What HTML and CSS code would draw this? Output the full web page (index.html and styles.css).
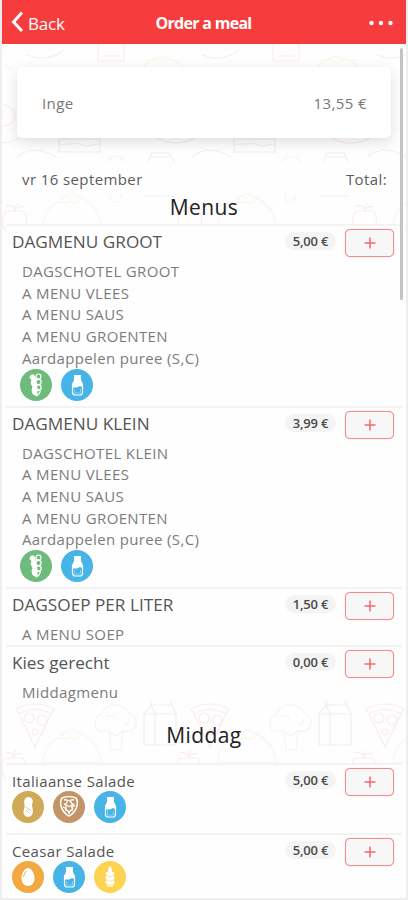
FILE: index.html
```html
<!DOCTYPE html>
<html lang="nl">
<head>
    <meta charset="utf-8">
    <title>Order a meal</title>
    <link rel="stylesheet" href="styles.css">
</head>
<body>
    <svg class="defs" width="0" height="0">
        <symbol id="milk" viewBox="0 0 32 32">
            <path d="M11.500 15v8.500a2.500 2.500 0 0 0 2.500 2.500h5a2.500 2.500 0 0 0 2.500-2.500V15" fill="none" stroke="#fff" stroke-width="1.200"/>
            <path d="M13 6h7v5l2 4v3.500l-3-1.500-3 1.500h-5V15l2-4z" fill="#fff"/>
            <path d="M13.500 20v4h6v-4" fill="none" stroke="#fff" stroke-width=".6" opacity=".6"/>
        </symbol>
        <symbol id="celery" viewBox="0 0 32 32">
            <path d="M10 8c1-3 4-3 5 0l1 6 1 5v8l-4-2-1-4 1-3-2-4 1-3-2-2z" fill="#fff" stroke="#fff"/>
            <g fill="none" stroke="#fff" stroke-width="1.200">
                <circle cx="18.500" cy="7.500" r="2.500"/>
                <circle cx="18.500" cy="13" r="2.700"/>
                <circle cx="18.500" cy="18.500" r="2.700"/>
                <path d="M16 22q5-2 4 1t-4 4"/>
            </g>
        </symbol>
        <symbol id="peanut" viewBox="0 0 32 32">
            <path d="M16.500 6c3 0 5 3 4 6-.7 2-.5 3 0 5 1.500 5-1 9-4.500 9s-5.500-4-4-8c.8-2 .8-3 .3-5-.8-4 1.200-7 4.200-7z" fill="#fff"/>
            <path d="M14 16l5 4M14 19l3 3" stroke="#d0aa58" stroke-width=".7"/>
        </symbol>
        <symbol id="walnut" viewBox="0 0 32 32">
            <path d="M9 7q7-3 14 0 2 3 1 8-2 7-8 10-6-3-8-10-1-5 1-8z" fill="none" stroke="#fff" stroke-width="1.500"/>
            <path d="M11 9q4-1 3 2t-3 2q4 1 1 5M21 9q-4-1-3 2t3 2q-4 1-1 5M14 14q2 3 4 0M12 19q4 0 4 4 0-4 4-4M15 9l3 2M10 16l4 2M18 17l4-3" fill="none" stroke="#fff" stroke-width="1.300"/>
        </symbol>
        <symbol id="egg" viewBox="0 0 32 32">
            <path d="M16 7c3 0 6.500 5 6.500 10s-3 8-6.500 8-6.500-3-6.500-8S13 7 16 7z" fill="#fff"/>
            <path d="M11.500 16q.5-4 3-6" fill="none" stroke="#f3a942" stroke-width="1"/>
        </symbol>
        <symbol id="wheat" viewBox="0 0 32 32">
            <path d="M16 5q3 3 1.500 6 3-.5 3 1.500l-1 2.500q1.500 0 1 2.500l-1 2q1.500 0 1 2.500l-1.500 3q-3 1.500-6 0L11.500 22q-.5-2.500 1-2.500l-1-2q-.5-2.500 1-2.500l-1-2.500q0-2 3-1.500Q13 8 16 5z" fill="#fff"/>
            <path d="M12 14l4 2 4-2M12 18.500l4 2 4-2M12 22.500l4 2 4-2" fill="none" stroke="#fdd352" stroke-width=".6"/>
        </symbol>
        <symbol id="plus" viewBox="0 0 12 12">
            <path d="M6 .5v11M.5 6h11" fill="none" stroke="#f4696b" stroke-width="1.500"/>
        </symbol>
    </svg>

    <header class="navbar">
        <a class="back">
            <svg width="14" height="22" viewBox="0 0 14 22"><path d="M12 1.500L3.500 11l8.500 9" fill="none" stroke="#fff" stroke-width="3"/></svg>
            <span>Back</span>
        </a>
        <h1>Order a meal</h1>
        <svg class="more" width="24" height="6" viewBox="0 0 24 6" fill="#fff">
            <circle cx="2.500" cy="3" r="2.200"/><circle cx="12" cy="3" r="2.200"/><circle cx="21.500" cy="3" r="2.200"/>
        </svg>
    </header>

    <main class="page">
        <svg class="food" width="404" height="856" fill="none" stroke-width="1.200">
            <defs>
                <g id="pizza" stroke="#fbe9ea">
                    <path d="M0 4Q19 -6 38 4l-3 5Q19 0 3 9zM3 9l16 33L35 9"/>
                    <circle cx="13" cy="13" r="5"/><circle cx="26" cy="15" r="5"/><circle cx="19" cy="27" r="3"/>
                </g>
                <g id="broccoli" stroke="#f0f3f1">
                    <path d="M12 27q-12 3-12-8 0-7 6-8Q11 0 21 1q9 0 13 8 9 3 7 12-3 8-13 6M14 27l2 19h10l2-19-7 5zM11 13q6-4 9 2M28 20q5 1 6-5"/>
                </g>
                <g id="carton" stroke="#e9ecf1">
                    <path d="M0 14L7 5h21l4 9v31H0zM7 0h20v5H7zM0 14h11v31M11 14L7 5M11 14h21"/>
                </g>
                <g id="taco" stroke="#f9f6e4">
                    <path d="M0 34Q2 14 18 9q3-6 7-5 5-5 9 0 20 7 25 30zM18 9q5 4 9 0 5 5 10-1"/>
                </g>
                <g id="tomato" stroke="#fbe9ea">
                    <path d="M3 11q10-3 20 0 4 12-2 19H4Q-2 22 3 11zM13 11q-1-5 2-9M13 8Q8 3 4 5M13 8q5-4 9-2"/>
                </g>
                <g id="tile">
                    <path stroke="#fbe9ea" d="M96 0v17h26V0M100 12h18M15 113q17-14 39 0M25 11q20 8 37-5"/>
                    <path stroke="#f9f6e4" d="M139 26q17-26 46 0M-36 26q17-26 46 0M144 16h36"/>
                    <path stroke="#fbe9ea" d="M155 94q18 10 38 0M-20 94q18 10 38 0M0 60q13 3 13 12T0 82"/>
                    <path stroke="#e9ecf1" d="M57 95h41v13H57zM57 101l20-2 6 3 15-2M146 118l4-9h17l5 9M149 113h20M142 152h30"/>
                    <path stroke="#f2f4f2" d="M108 150q0 9 5 8 6 0 6-8M104 118q10-12 20 0"/>
                    <use href="#taco" x="41" y="148"/>
                    <use href="#tomato" x="0" y="157"/>
                </g>
                <g id="tile-low">
                    <use href="#pizza" x="14" y="661"/>
                    <use href="#broccoli" x="93" y="660"/>
                    <use href="#carton" x="142" y="656"/>
                    <use href="#taco" x="41" y="684"/>
                    <use href="#tomato" x="-1" y="704"/>
                </g>
            </defs>
            <use href="#tile"/><use href="#tile" x="175"/><use href="#tile" x="350"/>
            <use href="#tile-low"/><use href="#tile-low" x="175"/><use href="#tile-low" x="350"/>
        </svg>

        <section class="balance">
            <span>Inge</span>
            <span>13,55 €</span>
        </section>

        <div class="day">
            <span>vr 16 september</span>
            <span>Total:</span>
        </div>

        <h2 class="menus">Menus</h2>
        <ul class="items">
            <li>
                <div class="row">
                    <h3>DAGMENU GROOT</h3>
                    <span class="price">5,00 €</span>
                    <button class="add"><svg><use href="#plus"/></svg></button>
                </div>
                <div class="parts">
                    <p>DAGSCHOTEL GROOT</p>
                    <p>A MENU VLEES</p>
                    <p>A MENU SAUS</p>
                    <p>A MENU GROENTEN</p>
                    <p>Aardappelen puree (S,C)</p>
                </div>
                <div class="allergens inset">
                    <svg class="green"><use href="#celery"/></svg>
                    <svg class="blue"><use href="#milk"/></svg>
                </div>
            </li>
            <li>
                <div class="row">
                    <h3>DAGMENU KLEIN</h3>
                    <span class="price">3,99 €</span>
                    <button class="add"><svg><use href="#plus"/></svg></button>
                </div>
                <div class="parts">
                    <p>DAGSCHOTEL KLEIN</p>
                    <p>A MENU VLEES</p>
                    <p>A MENU SAUS</p>
                    <p>A MENU GROENTEN</p>
                    <p>Aardappelen puree (S,C)</p>
                </div>
                <div class="allergens inset">
                    <svg class="green"><use href="#celery"/></svg>
                    <svg class="blue"><use href="#milk"/></svg>
                </div>
            </li>
            <li>
                <div class="row">
                    <h3>DAGSOEP PER LITER</h3>
                    <span class="price">1,50 €</span>
                    <button class="add"><svg><use href="#plus"/></svg></button>
                </div>
                <div class="parts">
                    <p>A MENU SOEP</p>
                </div>
            </li>
            <li>
                <div class="row">
                    <h3>Kies gerecht</h3>
                    <span class="price">0,00 €</span>
                    <button class="add"><svg><use href="#plus"/></svg></button>
                </div>
                <div class="parts">
                    <p>Middagmenu</p>
                </div>
            </li>
        </ul>

        <h2 class="middag">Middag</h2>
        <ul class="items salads">
            <li>
                <div class="row">
                    <h3>Italiaanse Salade</h3>
                    <span class="price">5,00 €</span>
                    <button class="add"><svg><use href="#plus"/></svg></button>
                </div>
                <div class="allergens">
                    <svg class="sand"><use href="#peanut"/></svg>
                    <svg class="brown"><use href="#walnut"/></svg>
                    <svg class="blue"><use href="#milk"/></svg>
                </div>
            </li>
            <li>
                <div class="row">
                    <h3>Ceasar Salade</h3>
                    <span class="price">5,00 €</span>
                    <button class="add"><svg><use href="#plus"/></svg></button>
                </div>
                <div class="allergens">
                    <svg class="orange"><use href="#egg"/></svg>
                    <svg class="blue"><use href="#milk"/></svg>
                    <svg class="yellow"><use href="#wheat"/></svg>
                </div>
            </li>
        </ul>
        <div class="scrollbar"></div>
    </main>
</body>
</html>
```
FILE: styles.css
```css
* {
    box-sizing: border-box;
}
body {
    margin: 0;
    height: 900px;
    overflow: hidden;
    background: #fefefe;
    border: 2px solid #eeeeee;
    border-top: 0;
    font-family: "Open Sans", sans-serif;
    color: #444;
}
h1, h2, h3, p, ul {
    margin: 0;
    padding: 0;
    font-weight: 400;
}
ul {
    list-style: none;
}
.defs {
    display: block;
}

.navbar {
    height: 44px;
    padding: 2px 13px 0 8px;
    display: grid;
    grid-template-columns: 1fr auto 1fr;
    align-items: center;
    background: #f73c3e;
    color: #fff;
}
.back {
    display: flex;
    align-items: center;
    gap: 4px;
    font-size: 17px;
    letter-spacing: -0.2px;
}
.back svg {
    margin-top: -3px;
}
.navbar h1 {
    padding-left: 4px;
    font-size: 16px;
    font-weight: 700;
    letter-spacing: -0.7px;
}
.more {
    justify-self: end;
    margin-top: -1px;
}

.page {
    position: relative;
    height: 854px;
    padding-top: 23px;
}
.food {
    position: absolute;
    top: 0;
    left: 0;
    z-index: -1;
    opacity: 0.8;
}
.scrollbar {
    position: absolute;
    top: 4px;
    right: 3px;
    width: 3px;
    height: 252px;
    border-radius: 2px;
    background: #c3c3c3;
}

.balance {
    height: 71px;
    margin: 0 15px;
    padding: 0 24px 0 25px;
    display: flex;
    justify-content: space-between;
    align-items: center;
    background: #fff;
    border-radius: 6px;
    box-shadow: 0 4px 14px rgba(0, 0, 0, 0.13);
    font-size: 15px;
    letter-spacing: 0.4px;
    color: #777;
}
.day {
    height: 30px;
    margin-top: 26px;
    padding: 0 19px 0 20px;
    display: flex;
    justify-content: space-between;
    align-items: center;
    font-size: 15px;
    letter-spacing: 0.4px;
    color: #5c5c5c;
}
h2 {
    font-size: 21px;
    line-height: 28px;
    letter-spacing: 0.4px;
    text-align: center;
    color: #222;
}
.menus {
    height: 31px;
    margin-top: -1px;
}
.middag {
    height: 62px;
    padding-top: 20px;
}

.items li {
    height: 181.500px;
    margin: 0 4px;
    padding: 0 8px 0 6px;
    background: #fefefe;
    border-top: 2px solid #f3f3f3;
}
.items li:nth-child(3) {
    height: 57.500px;
}
.items li:nth-child(4) {
    height: 56.500px;
}
.row {
    height: 34px;
    display: grid;
    grid-template-columns: 1fr 51px 49px;
    gap: 9px;
    align-items: start;
}
.row h3 {
    font-size: 17.200px;
    line-height: 32px;
    color: #555;
}
.price {
    height: 18px;
    margin-top: 6px;
    border-radius: 9px;
    background: #f4f4f4;
    font-size: 13px;
    font-weight: 600;
    line-height: 18px;
    letter-spacing: -0.2px;
    text-align: center;
    color: #4a4a4a;
}
.add {
    height: 28px;
    margin-top: 3px;
    padding: 0;
    display: flex;
    align-items: center;
    justify-content: center;
    background: #f7f7f7;
    border: 1.500px solid #f58b8c;
    border-radius: 5px;
    box-shadow: 0 0 1px #f58b8c;
}
.add svg {
    width: 12px;
    height: 12px;
}
.parts {
    padding: 1px 0 0 10px;
    font-size: 15px;
    line-height: 21.700px;
    letter-spacing: 0.350px;
    color: #7c7c7c;
}

.allergens {
    display: flex;
    gap: 9px;
}
.allergens.inset {
    margin-top: -1px;
    padding-left: 8px;
}
.allergens svg {
    width: 32px;
    height: 32px;
    border-radius: 50%;
}
.green { background: #6ebb7c; }
.blue { background: #47b4e7; }
.sand { background: #d0aa58; }
.brown { background: #c39465; }
.orange { background: #f3a942; }
.yellow { background: #fdd352; }

.salads li,
.salads li:nth-child(n) {
    height: 70px;
}
.salads .row {
    height: 26px;
}
.salads .row h3 {
    font-size: 15px;
    letter-spacing: 0.350px;
}
```
